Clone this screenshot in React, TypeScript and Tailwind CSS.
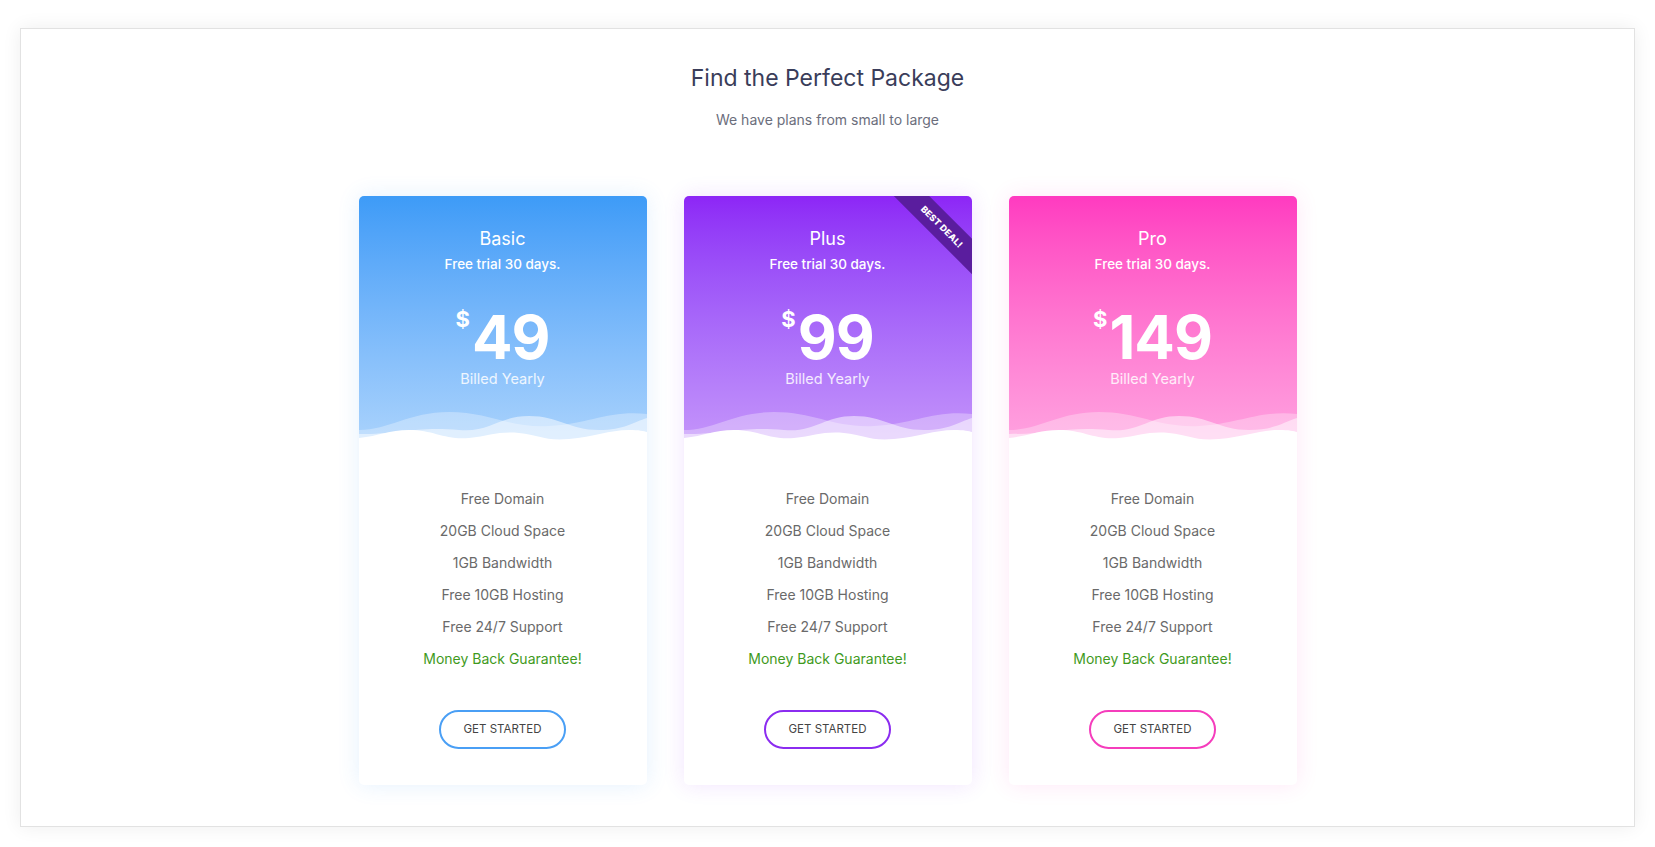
const plans = [
  {
    name: 'Basic',
    price: '49',
    header: 'bg-gradient-to-b from-[#3d9bf7] to-[#abd3fc]',
    shadow: 'shadow-[0_0_22px_rgba(61,155,247,0.14)]',
    button: 'border-[#4a9ff5]',
    ribbon: false,
  },
  {
    name: 'Plus',
    price: '99',
    header: 'bg-gradient-to-b from-[#8d25f6] to-[#c595fa]',
    shadow: 'shadow-[0_0_22px_rgba(141,37,246,0.12)]',
    button: 'border-[#8b2cf0]',
    ribbon: true,
  },
  {
    name: 'Pro',
    price: '149',
    header: 'bg-gradient-to-b from-[#ff3ac0] to-[#ffa3e0]',
    shadow: 'shadow-[0_0_22px_rgba(255,58,192,0.12)]',
    button: 'border-[#f53dbc]',
    ribbon: false,
  },
]

const features = ['Free Domain', '20GB Cloud Space', '1GB Bandwidth', 'Free 10GB Hosting', 'Free 24/7 Support']

function Waves() {
  return (
    <svg className="block w-full h-[40px]" viewBox="0 0 288 40" preserveAspectRatio="none">
      {/* back wave */}
      <path
        d="M0 24 C 30 24, 50 6, 90 6 C 130 6, 150 22, 190 20 C 230 18, 250 4, 288 8 L288 40 L0 40 Z"
        fill="#ffffff"
        opacity="0.3"
      />
      {/* middle wave */}
      <path
        d="M0 28 C 40 28, 60 20, 100 24 C 130 27, 140 10, 170 10 C 200 10, 210 24, 240 24 C 265 24, 275 16, 288 12 L288 40 L0 40 Z"
        fill="#ffffff"
        opacity="0.5"
      />
      {/* front wave */}
      <path
        d="M0 32 C 20 30, 30 24, 50 24 C 75 24, 85 34, 110 32 C 130 30, 140 25, 160 27 C 180 29, 185 35, 210 33 C 235 31, 250 24, 270 24 C 280 24, 285 25, 288 26 L288 40 L0 40 Z"
        fill="#ffffff"
      />
    </svg>
  )
}

function Card({ plan }: { plan: (typeof plans)[number] }) {
  return (
    <div className={`relative w-[288px] h-[589px] bg-white rounded-[5px] overflow-hidden flex flex-col ${plan.shadow}`}>
      <div className={`relative h-[250px] flex flex-col items-center text-white ${plan.header}`}>
        <div className="pt-[30px] text-[18px] leading-[26px]">{plan.name}</div>
        <div className="mt-[2px] text-[13.5px] leading-[20px] font-medium">Free trial 30 days.</div>
        <div className="mt-[33px] flex items-start font-bold">
          <span className="text-[22px] leading-[22px] mt-[1px] mr-[2px]">$</span>
          <span className="text-[60px] leading-[60px] tracking-[-1px]">{plan.price}</span>
        </div>
        <div className="mt-[2px] text-[14.5px] leading-[20px] text-white/85">Billed Yearly</div>
        <div className="mt-auto w-full">
          <Waves />
        </div>
        {plan.ribbon && (
          <div className="absolute top-0 right-0 w-[80px] h-[80px] overflow-hidden">
            <div className="absolute top-[18px] right-[-40px] w-[140px] h-[25px] bg-[#5a1d9e] rotate-45 flex items-center justify-center text-[9px] font-extrabold tracking-[0.2px] text-white">
              BEST DEAL!
            </div>
          </div>
        )}
      </div>
      <div className="flex flex-col items-center pt-[37px]">
        {features.map((f) => (
          <div key={f} className="text-[14px] leading-[32px] text-[#6a6a6a]">
            {f}
          </div>
        ))}
        <div className="text-[14px] leading-[32px] text-[#3f9a1e]">Money Back Guarantee!</div>
        <button className={`mt-[35px] w-[127px] h-[39px] rounded-full border-2 bg-white text-[11.5px] text-[#444] uppercase ${plan.button}`}>
          Get Started
        </button>
      </div>
    </div>
  )
}

export default function App() {
  return (
    <div className="w-[1655px] h-[847px] bg-white pt-[28px] px-[20px] pb-[20px] font-['Inter','Noto_Sans',sans-serif]">
      <div className="h-full border border-[#e2e2e2] shadow-[0_0_18px_rgba(0,0,0,0.07)] bg-white flex flex-col items-center">
        <h1 className="pt-[34px] text-[23px] leading-[30px] text-[#3a3d5a] font-normal">Find the Perfect Package</h1>
        <p className="mt-[17px] text-[14px] leading-[20px] text-[#6b6e7c]">We have plans from small to large</p>
        <div className="mt-[66px] flex gap-[37px]">
          {plans.map((p) => (
            <Card key={p.name} plan={p} />
          ))}
        </div>
      </div>
    </div>
  )
}
